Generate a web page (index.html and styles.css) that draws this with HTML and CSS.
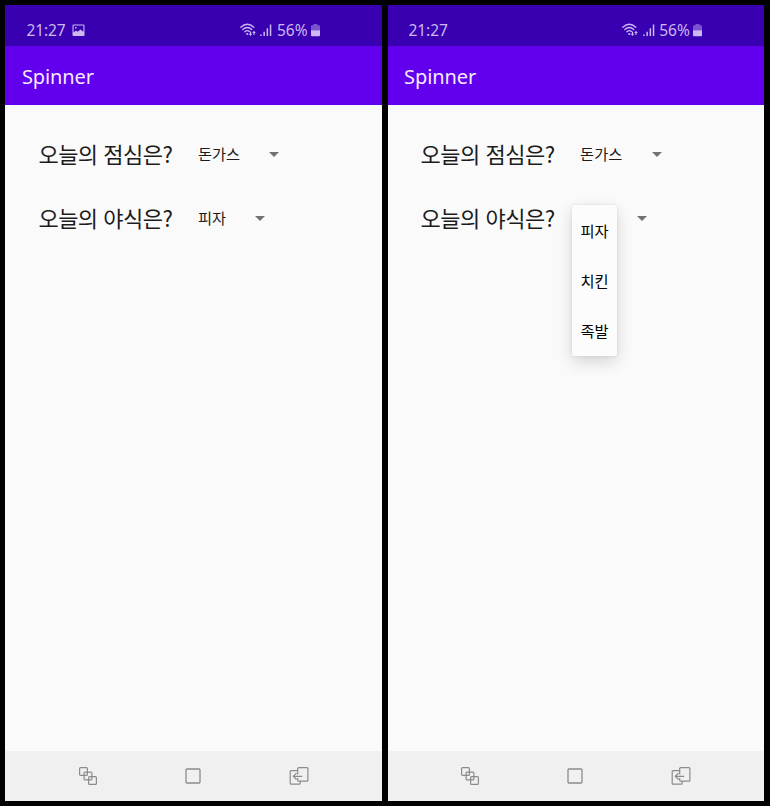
FILE: index.html
```html
<!DOCTYPE html>
<html lang="ko">
<head>
<meta charset="utf-8">
<title>Spinner</title>
<link rel="stylesheet" href="styles.css">
</head>
<body>
<svg class="defs" aria-hidden="true">
  <symbol id="picture" viewBox="0 0 13 13"><path fill-rule="evenodd" d="M1.5.5h10a1 1 0 0 1 1 1v9.500a1 1 0 0 1-1 1h-10a1 1 0 0 1-1-1v-9.500a1 1 0 0 1 1-1zM1.600 1.600v7l2.400-2 1.700 1.200 2.800-2.400 2.900 2.300v-6.100zM3 3h1.500v1.500h-1.500z"/></symbol>
  <symbol id="wifi" viewBox="0 0 17 14"><g fill="none" stroke="currentColor" stroke-width="1.300" stroke-linecap="round"><path d="M.8 4.200Q7.300-1.800 13.800 4.200M2.800 6.600Q7.300 2.400 11.800 6.600M4.900 8.800Q7.300 6.700 9.400 8.500"/></g><circle cx="7.300" cy="11" r="1.100"/><path d="M10 8.500h1.100v2.300h1.200l-1.800 2.200-1.800-2.200H10zM13.500 12h1.100V9.900h1.200L14 7.700l-1.800 2.200h1.300z"/></symbol>
  <symbol id="signal" viewBox="0 0 12 13"><path d="M.2 10.400h1.500V12H.2zM3.400 7.800h1.500V12H3.400zM6.600 4.300h1.500V12H6.600zM9.800.5h1.500V12H9.800z"/></symbol>
  <symbol id="battery" viewBox="0 0 9 13"><path opacity=".45" d="M2.500 0h4v1.200H8a1 1 0 0 1 1 1v4H0v-4a1 1 0 0 1 1-1h1.500z"/><path d="M0 6.200h9v5a1 1 0 0 1-1 1H1a1 1 0 0 1-1-1z"/></symbol>
  <symbol id="recent" viewBox="0 0 20 20"><g fill="none" stroke="currentColor" stroke-width="1.200"><rect x="1.600" y="1.600" width="7.800" height="7.800" rx="1"/><rect x="6.100" y="6.100" width="7.800" height="7.800" rx="1"/><rect x="10.600" y="10.600" width="7.800" height="7.800" rx="1"/></g></symbol>
  <symbol id="home" viewBox="0 0 16 16"><rect x="1" y="1" width="14" height="14" rx="1" fill="none" stroke="currentColor" stroke-width="1.300"/></symbol>
  <symbol id="back" viewBox="0 0 20 20"><g fill="none" stroke="currentColor" stroke-width="1.200"><path d="M8.700 4.700H2.200a1 1 0 0 0-1 1v11.500a1 1 0 0 0 1 1h8a1 1 0 0 0 1-1v-2M8.700 8.600V2.600a1 1 0 0 1 1-1h8.200a1 1 0 0 1 1 1v11.600a1 1 0 0 1-1 1H9.700a1 1 0 0 1-1-1v-2.300M13.200 10.300H4.400M7.500 7.100l-3.200 3.200 3.200 3.200"/></g></symbol>
</svg>

<main class="screens">
  <section class="phone">
    <header class="status">
      <span class="clock">21:27</span>
      <svg class="picture"><use href="#picture"/></svg>
      <div class="indicators">
        <svg class="wifi"><use href="#wifi"/></svg>
        <svg class="signal"><use href="#signal"/></svg>
        <span class="percent">56%</span>
        <svg class="battery"><use href="#battery"/></svg>
      </div>
    </header>
    <h1 class="app-bar">Spinner</h1>
    <div class="content">
      <div class="question"><span class="label">오늘의 점심은?</span><div class="spinner"><span class="value">돈가스</span><i class="caret"></i></div></div>
      <div class="question"><span class="label">오늘의 야식은?</span><div class="spinner"><span class="value">피자</span><i class="caret"></i></div></div>
    </div>
    <nav class="nav">
      <svg class="recent"><use href="#recent"/></svg>
      <svg class="home"><use href="#home"/></svg>
      <svg class="back"><use href="#back"/></svg>
    </nav>
  </section>

  <section class="phone">
    <header class="status">
      <span class="clock">21:27</span>
      <div class="indicators">
        <svg class="wifi"><use href="#wifi"/></svg>
        <svg class="signal"><use href="#signal"/></svg>
        <span class="percent">56%</span>
        <svg class="battery"><use href="#battery"/></svg>
      </div>
    </header>
    <h1 class="app-bar">Spinner</h1>
    <div class="content">
      <div class="question"><span class="label">오늘의 점심은?</span><div class="spinner"><span class="value">돈가스</span><i class="caret"></i></div></div>
      <div class="question"><span class="label">오늘의 야식은?</span><div class="spinner spinner-open"><i class="caret"></i>
        <ul class="menu"><li>피자</li><li>치킨</li><li>족발</li></ul>
      </div></div>
    </div>
    <nav class="nav">
      <svg class="recent"><use href="#recent"/></svg>
      <svg class="home"><use href="#home"/></svg>
      <svg class="back"><use href="#back"/></svg>
    </nav>
  </section>
</main>
</body>
</html>
```
FILE: styles.css
```css
* { box-sizing: border-box; }
body {
  margin: 0;
  background: #000;
  font-family: "Noto Sans", "Noto Sans CJK KR", sans-serif;
}
.defs { position: absolute; width: 0; height: 0; }
.screens {
  display: grid;
  grid-template-columns: 376.6px 376.6px;
  gap: 5.6px;
  height: 806px;
  padding: 5px 0 5px 5.4px;
}
.phone {
  display: grid;
  grid-template-rows: 41px 59px 1fr 50px;
  background: #fafafa;
}
.status {
  display: flex;
  align-items: center;
  padding: 9px 0 0 21px;
  background: #3800b0;
  color: #cdb8f2;
  fill: currentColor;
  font-size: 15.5px;
  line-height: 20px;
}
.clock { width: 40px; letter-spacing: -.1px; }
.picture { width: 13px; height: 13px; margin-left: 5.5px; }
.indicators {
  display: flex;
  align-items: center;
  margin: 0 62px 0 auto;
}
.wifi { width: 17px; height: 14px; margin-right: 3.5px; }
.signal { width: 12px; height: 13px; }
.percent { width: 34px; margin-left: 4.5px; }
.battery { width: 9px; height: 13px; }
.app-bar {
  margin: 0;
  padding-left: 16.5px;
  background: #6200ee;
  color: #f7e9ff;
  font-size: 20px;
  font-weight: 400;
  line-height: 61px;
  letter-spacing: -.1px;
}
.content { padding: 17px 0 0 33px; }
.question {
  display: flex;
  align-items: center;
  height: 64px;
  color: #1c1c1c;
}
.label {
  width: 159.5px;
  padding-bottom: 2px;
  font: 22px/32px "Noto Sans CJK KR", sans-serif;
  letter-spacing: -.5px;
  white-space: nowrap;
}
.spinner {
  display: flex;
  align-items: center;
  position: relative;
  font: 15.3px/24px "Noto Sans CJK KR", sans-serif;
}
.value { padding-bottom: 2px; }
.caret {
  width: 0;
  margin-left: 29.2px;
  border: 5.2px solid transparent;
  border-top: 5px solid #727272;
  border-bottom: 0;
}
.spinner-open .caret { margin-left: 57px; }
.menu {
  position: absolute;
  top: -11px;
  left: -8.4px;
  width: 45.5px;
  margin: 0;
  padding: 0 0 .6px;
  list-style: none;
  background: #fcfcfc;
  border-radius: 2px;
  box-shadow: 0 6px 16px rgba(0, 0, 0, .15), 0 0 3px rgba(0, 0, 0, .1);
  color: #000;
}
.menu li { height: 50.3px; padding-left: 8.8px; line-height: 50px; }
.nav {
  display: grid;
  grid-template-columns: repeat(3, 105.5px);
  justify-content: center;
  justify-items: center;
  align-items: center;
  padding-right: 1px;
  background: #f0f0f0;
  color: #8b8b8b;
}
.recent, .back { width: 20px; height: 20px; }
.home { width: 16px; height: 16px; }
```
